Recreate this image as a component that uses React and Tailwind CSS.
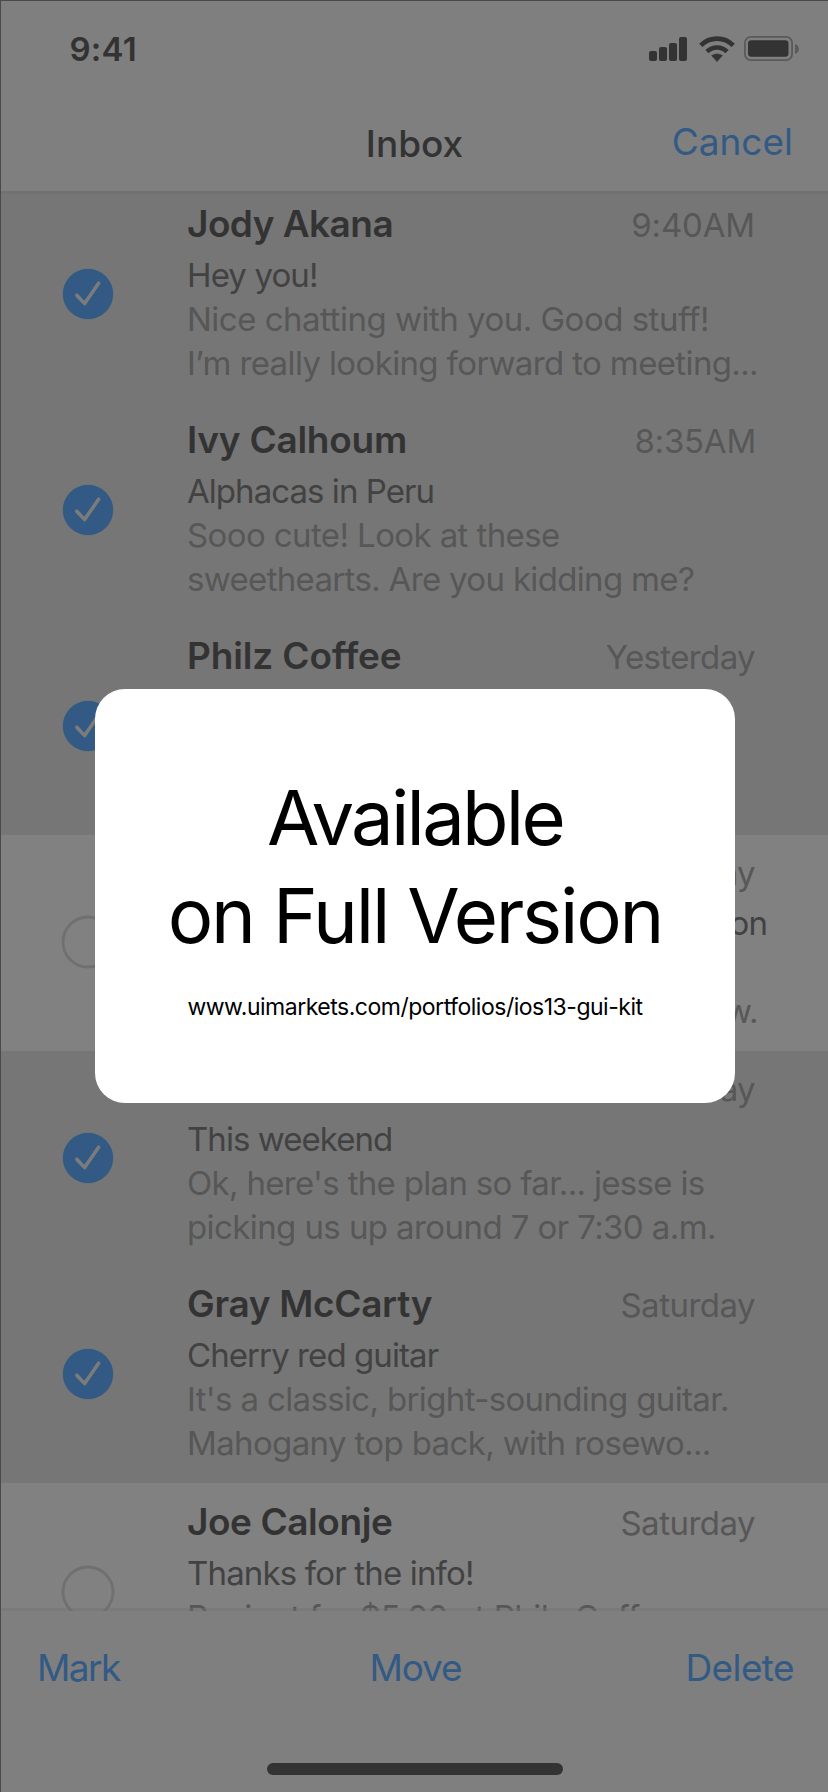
const messages = [
  {
    name: "Jody Akana", nameTracking: "tracking-[-0.55px]", time: "9:40AM", timeTracking: "tracking-[-0.17px]", timeEnd: "pr-[73px]",
    subject: "Hey you!", subjectTracking: "tracking-[-0.88px]", checked: true,
    lines: [
      ["Nice chatting with you. Good stuff!", "tracking-[-0.5px]"],
      ["I’m really looking forward to meeting...", "tracking-[-0.63px]"],
    ],
  },
  {
    name: "Ivy Calhoum", nameTracking: "tracking-[-0.24px]", time: "8:35AM", timeTracking: "tracking-[-0.23px]", timeEnd: "pr-[72px]",
    subject: "Alphacas in Peru", subjectTracking: "tracking-[-0.95px]", checked: true,
    lines: [
      ["Sooo cute! Look at these", "tracking-[-0.6px]"],
      ["sweethearts. Are you kidding me?", "tracking-[-0.67px]"],
    ],
  },
  {
    name: "Philz Coffee", nameTracking: "tracking-[-0.13px]", time: "Yesterday", timeTracking: "tracking-[-0.62px]", timeEnd: "pr-[73px]",
    subject: "", subjectTracking: "", checked: true, lines: [],
  },
  {
    name: "\u00a0", nameTracking: "", time: "Yesterday", timeTracking: "tracking-[-0.62px]", timeEnd: "pr-[73px]",
    subject: "on", subjectTracking: "pr-[61px] text-right tracking-[-0.88px]", checked: false,
    lines: [
      ["", ""],
      ["w.", "pr-[70px] text-right tracking-[-0.6px]"],
    ],
  },
  {
    name: "\u00a0", nameTracking: "", time: "Yesterday", timeTracking: "tracking-[-0.62px]", timeEnd: "pr-[73px]",
    subject: "This weekend", subjectTracking: "tracking-[-0.95px]", checked: true,
    lines: [
      ["Ok, here's the plan so far... jesse is", "tracking-[-0.68px]"],
      ["picking us up around 7 or 7:30 a.m.", "tracking-[-0.59px]"],
    ],
  },
  {
    name: "Gray McCarty", nameTracking: "tracking-[-0.32px]", time: "Saturday", timeTracking: "tracking-[-0.52px]", timeEnd: "pr-[73px]",
    subject: "Cherry red guitar", subjectTracking: "tracking-[-0.92px]", checked: true,
    lines: [
      ["It's a classic, bright-sounding guitar.", "tracking-[-0.65px]"],
      ["Mahogany top back, with rosewo...", "tracking-[-0.64px]"],
    ],
  },
  {
    name: "Joe Calonje", nameTracking: "tracking-[-0.43px]", time: "Saturday", timeTracking: "tracking-[-0.52px]", timeEnd: "pr-[73px]",
    subject: "Thanks for the info!", subjectTracking: "tracking-[-0.83px]", checked: false, last: true,
    lines: [["Reciept for $5.00 at Philz Coffee on", "tracking-[-0.52px]"]],
  },
];

function SelectMark({ checked }) {
  return (
    <svg className="h-[54px] w-[54px] shrink-0" viewBox="0 0 54 54" fill="none">
      {checked ? (
        <>
          <circle cx="27" cy="27" r="25.2" fill="#325a84" />
          <path d="M15.8 28.2 L23.6 36.6 L37.6 16.2" stroke="#7b7b7b" strokeWidth="3.6" strokeLinecap="round" strokeLinejoin="round" />
        </>
      ) : (
        <circle cx="27" cy="27" r="25" stroke="#707070" strokeWidth="2.8" />
      )}
    </svg>
  );
}

function Message({ m }) {
  return (
    <div className={`flex h-[216px] shrink-0 ${m.checked ? "bg-[#767676]" : "bg-[#818181]"} ${m.last ? "pt-0.5" : ""}`}>
      <div className="w-[186px] pt-20 pl-[60px]">
        <SelectMark checked={m.checked} />
      </div>
      <div className="min-w-0 flex-1 pt-[15px] text-[33px] leading-[44px] whitespace-nowrap text-[#575757]">
        <div className="flex h-[51px] items-baseline justify-between">
          <span className={`text-[37px] font-semibold text-[#333333] ${m.nameTracking}`}>{m.name}</span>
          <span className={`${m.timeTracking} ${m.timeEnd}`}>{m.time}</span>
        </div>
        <div className={`h-11 text-[#424242] ${m.subjectTracking}`}>{m.subject}</div>
        {m.lines.map(([text, tracking], i) => (
          <div key={i} className={`h-11 ${tracking}`}>{text}</div>
        ))}
      </div>
    </div>
  );
}

function StatusIcons() {
  return (
    <svg className="h-[30px] w-[152px]" viewBox="648 33 152 30" fill="none">
      <g fill="#333333">
        <rect x="649" y="51" width="8" height="10" rx="2" />
        <rect x="659" y="47" width="8" height="14" rx="2" />
        <rect x="669" y="43" width="8" height="18" rx="2" />
        <rect x="679" y="37" width="8" height="24" rx="2" />
        <path d="M717 61.6 L711.6 55.6 A8 6.5 0 0 1 722.4 55.6 Z" stroke="#333333" strokeWidth="0.6" strokeLinejoin="round" />
      </g>
      <path d="M707 51.7 A14 14 0 0 1 727 51.7" stroke="#333333" strokeWidth="4.6" />
      <path d="M700.8 45.4 A22.8 22.8 0 0 1 733.2 45.4" stroke="#333333" strokeWidth="4.6" />
      <rect x="744.9" y="36.9" width="47.2" height="23.2" rx="6" stroke="#5a5a5a" strokeWidth="1.8" />
      <rect x="748" y="40.2" width="40.5" height="16.6" rx="3.2" fill="#333333" />
      <path d="M795 44 C800.2 45.6 800.2 52.4 795 54 Z" fill="#5a5a5a" />
    </svg>
  );
}

export default function App() {
  return (
    <div className="relative flex h-[1792px] w-[828px] flex-col overflow-hidden border-t border-l border-[#4a4a4a] bg-[#7f7f7f] font-[Inter,sans-serif]">
      <header className="z-10 h-[193px] shrink-0 border-b-[3px] border-[#717171] bg-[#7f7f7f]">
        <div className="flex h-[94px] items-center justify-between pr-[28px] pl-[68.5px]">
          <span className="pt-0.5 text-[33px] leading-[44px] font-semibold tracking-[0.2px] text-[#333333]">9:41</span>
          <StatusIcons />
        </div>
        <div className="grid h-[94px] grid-cols-3 items-center text-[37px] leading-[44px]">
          <span className="col-start-2 pt-[3px] text-center font-medium text-[#333333]">Inbox</span>
          <span className="pr-[35px] text-right text-[#325a84]">Cancel</span>
        </div>
      </header>

      <main className="-mt-[7px] flex flex-1 flex-col overflow-hidden">
        {messages.map((m, i) => <Message key={i} m={m} />)}
      </main>

      <footer className="relative flex h-[181px] shrink-0 flex-col items-center justify-between bg-[#7f7f7f] pb-[17px] text-[37px] leading-[44px] text-[#325a84]">
        <div className="absolute inset-x-0 -top-[3px] h-[3px] bg-[#707070]/40" />
        <div className="grid w-full grid-cols-3 pt-[35px] pr-[34px] pl-[36px]">
          <span className="tracking-[-1.6px]">Mark</span>
          <span className="text-center tracking-[-1.1px]">Move</span>
          <span className="text-right tracking-[-0.6px]">Delete</span>
        </div>
        <div className="h-3 w-[296px] rounded-full bg-[#333333]" />
      </footer>

      <div className="absolute top-[688px] left-[94px] flex h-[414px] w-[640px] flex-col items-center rounded-[30px] bg-white pt-[79px] whitespace-nowrap text-black">
        <h1 className="text-center text-[76px] leading-[98px]">
          <span className="block tracking-[-2.8px]">Available</span>
          <span className="block tracking-[-2.22px]">on Full Version</span>
        </h1>
        <p className="mt-[27px] text-[23px] leading-[32px] tracking-[-0.49px]">www.uimarkets.com/portfolios/ios13-gui-kit</p>
      </div>
    </div>
  );
}
